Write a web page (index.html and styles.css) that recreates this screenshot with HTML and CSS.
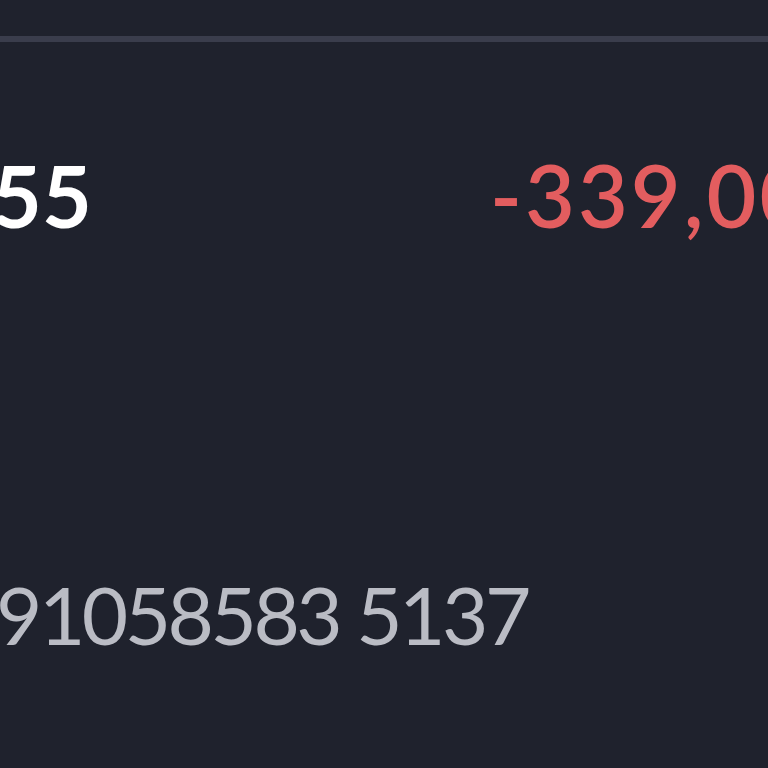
FILE: index.html
```html
<!DOCTYPE html>
<html lang="ru">
<head>
<meta charset="utf-8">
<link rel="stylesheet" href="styles.css">
</head>
<body>
<div class="screen">
  <div class="divider"></div>
  <div class="amount-row">
    <span class="balance">55</span>
    <span class="delta">-339,00</span>
  </div>
  <div class="account">91058583 5137</div>
</div>
</body>
</html>
```
FILE: styles.css
```css
html, body {
  margin: 0;
  padding: 0;
  background: #1f222d;
  overflow: hidden;
}
.screen {
  width: 768px;
  height: 768px;
  overflow: hidden;
  font-family: Lato, "Open Sans", sans-serif;
  display: flex;
  flex-direction: column;
}
.divider {
  margin-top: 36px;
  height: 6px;
  background: #3a3d4c;
  flex-shrink: 0;
}
.amount-row {
  margin-top: 110px;
  display: flex;
  align-items: baseline;
  white-space: nowrap;
  margin-left: -8px;
}
.balance {
  flex: 0 0 498px;
  color: #ffffff;
  font-size: 86px;
  font-weight: 700;
  line-height: 1;
}
.delta {
  color: #e35d5f;
  font-size: 86px;
  font-weight: 600;
  line-height: 1;
  letter-spacing: 3px;
}
.account {
  margin-top: 336px;
  color: #babcc4;
  font-size: 80px;
  font-weight: 400;
  line-height: 1;
  letter-spacing: -3.5px;
  white-space: nowrap;
  margin-left: -4px;
}
```
